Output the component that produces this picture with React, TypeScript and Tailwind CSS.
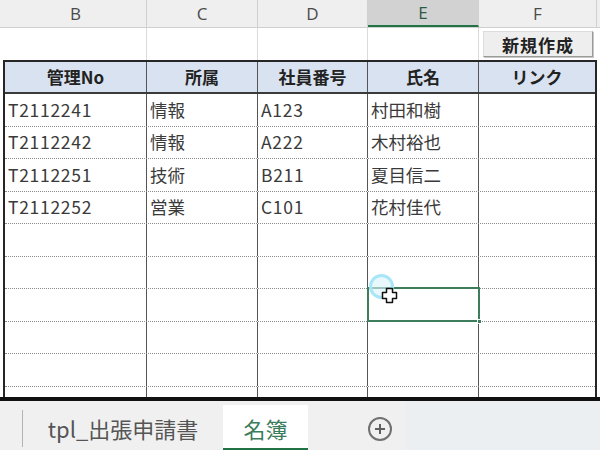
import React from 'react';

const rows = [
  ['T2112241', '情報', 'A123', '村田和樹'],
  ['T2112242', '情報', 'A222', '木村裕也'],
  ['T2112251', '技術', 'B211', '夏目信二'],
  ['T2112252', '営業', 'C101', '花村佳代'],
  ['', '', '', ''],
  ['', '', '', ''],
  ['', '', '', ''],
  ['', '', '', ''],
  ['', '', '', ''],
  ['', '', '', ''],
];

const jp = "font-['Noto_Sans_CJK_JP','Noto_Sans',sans-serif]";

const ColHeader: React.FC = () => (
  <div className="flex h-[28px] bg-[#efefef] border-b border-[#cfcfcf] text-[17px] text-[#4a4a4a] font-['Open_Sans','Noto_Sans',sans-serif]">
    <div className="w-[5px]" />
    <div className="w-[142px] border-r border-[#d0d0d0] flex items-center justify-center">B</div>
    <div className="w-[111px] border-r border-[#d0d0d0] flex items-center justify-center">C</div>
    <div className="w-[110px] border-r border-[#d0d0d0] flex items-center justify-center">D</div>
    <div className="w-[111px] border-r border-[#d0d0d0] bg-[#d2d2d2] border-b-2 border-b-[#217346] flex items-center justify-center text-[#2c5a42]">E</div>
    <div className="w-[118px] border-r border-[#d0d0d0] flex items-center justify-center">F</div>
    <div className="flex-1" />
  </div>
);

const PlusCursor: React.FC = () => (
  <svg width="17" height="17" viewBox="0 0 17 17">
    <path d="M5.5 1.5h6v4h4v6h-4v4h-6v-4h-4v-6h4z" fill="#fff" stroke="#111" strokeWidth="1.5" strokeLinejoin="round" />
  </svg>
);

export default function App() {
  return (
    <div className={`relative w-[600px] h-[450px] overflow-hidden bg-white ${jp}`}>
      <ColHeader />
      <div className="h-[369px] overflow-hidden">
        {/* row above the table */}
        <div className="flex h-[32px]">
          <div className="w-[5px]" />
          <div className="w-[142px] border-r border-[#dadada]" />
          <div className="w-[111px] border-r border-[#dadada]" />
          <div className="w-[110px] border-r border-[#dadada]" />
          <div className="w-[111px] border-r border-[#dadada]" />
          <div className="w-[118px] flex items-start justify-center pt-[3px]">
            <button className="w-[110px] h-[26px] bg-[#eeeeee] border border-[#dcdcdc] border-r-[#9a9a9a] border-b-[#9a9a9a] shadow-[1px_1px_0_#c8c8c8] text-[17px] font-bold text-[#222] leading-none tracking-[1px]">
              新規作成
            </button>
          </div>
        </div>

        <div className="ml-[3px] w-[594px] border-2 border-[#262626] border-b-0">
          <div className="flex h-[32px] bg-[#d9e2f0] border-b-2 border-[#3a3a3a] text-[17px] font-bold text-[#222]">
            <div className="w-[142px] border-r border-[#555] flex items-center justify-center">管理No</div>
            <div className="w-[111px] border-r border-[#555] flex items-center justify-center">所属</div>
            <div className="w-[110px] border-r border-[#555] flex items-center justify-center">社員番号</div>
            <div className="w-[111px] border-r border-[#555] flex items-center justify-center">氏名</div>
            <div className="flex-1 flex items-center justify-center">リンク</div>
          </div>
          {rows.map((r, i) => (
            <div key={i} className="flex h-[32.5px] border-b border-dotted border-b-[#8a8a8a] text-[17.5px] text-[#3a3a3a]">
              <div className="w-[142px] border-r border-[#555] flex items-center px-[3px] tracking-[0.7px]">{r[0]}</div>
              <div className="w-[111px] border-r border-[#555] flex items-center px-[3px]">{r[1]}</div>
              <div className="w-[110px] border-r border-[#555] flex items-center px-[3px] tracking-[0.7px]">{r[2]}</div>
              <div className="w-[111px] border-r border-[#555] flex items-center px-[3px]">{r[3]}</div>
              <div className="flex-1" />
            </div>
          ))}
        </div>
      </div>

      {/* sheet tabs */}
      <div className="flex h-[53px] border-t-4 border-[#111] bg-[#f0f0f0]">
        <div className="w-[22px]" />
        <div className="w-px mt-[9px] mb-[3px] bg-[#b4b4b4]" />
        <div className="w-[200px] flex items-center justify-center pt-[5px] text-[22px] text-[#555]">tpl_出張申請書</div>
        <div className="w-[85px] mt-[4px] bg-white border-b-2 border-[#217346] flex items-center justify-center pt-[3px] text-[22px] text-[#3b7c5c]">名簿</div>
        <div className="w-[98px] flex items-center pt-[6px] pl-[60px]">
          <div className="w-[24px] h-[24px] rounded-full border-2 border-[#707070] flex items-center justify-center">
            <svg width="12" height="12" viewBox="0 0 12 12">
              <path d="M6 1v10M1 6h10" stroke="#606060" strokeWidth="2" />
            </svg>
          </div>
        </div>
        <div className="flex-1 bg-[#ebeff1]" />
      </div>

      {/* selected cell E, with click ripple and cursor */}
      <div className="absolute left-[367px] top-[287px] w-[113px] h-[35px] border-2 border-[#3e7d5c]">
        <div className="absolute right-[-4px] bottom-[-4px] w-[5px] h-[5px] bg-[#3e7d5c] border border-white" />
      </div>
      <div className="absolute left-[369px] top-[274px] w-[25px] h-[25px] rounded-full border-[3px] border-[#a8e6f7] bg-[#d9f4fc]/60" />
      <div className="absolute left-[381px] top-[287px]">
        <PlusCursor />
      </div>
    </div>
  );
}
